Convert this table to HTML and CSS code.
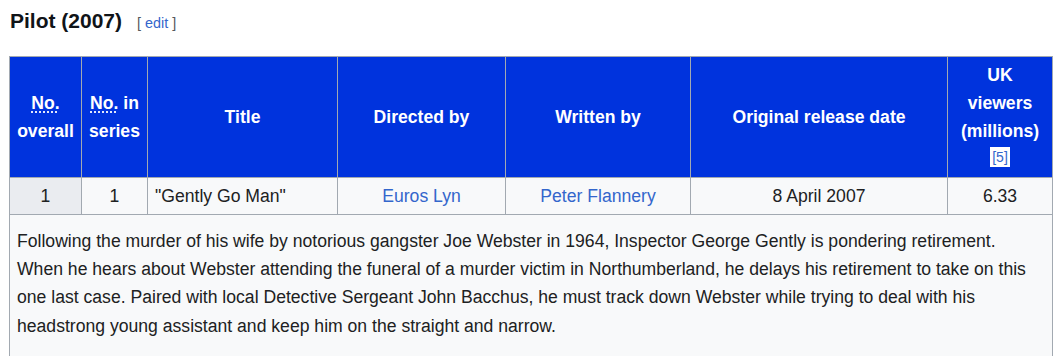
FILE: index.html
```html
<!DOCTYPE html>
<html>
<head>
<meta charset="utf-8">
<link rel="stylesheet" href="styles.css">
</head>
<body>
<div class="page">
  <h3 class="heading"><span class="title">Pilot (2007)</span><span class="editsection">[ <a href="#">edit</a> ]</span></h3>
  <table class="episodes">
    <colgroup>
      <col class="c1"><col class="c2"><col class="c3"><col class="c4"><col class="c5"><col class="c6"><col class="c7">
    </colgroup>
    <thead>
      <tr>
        <th><abbr>No.</abbr><br>overall</th>
        <th><abbr>No.</abbr> in<br>series</th>
        <th>Title</th>
        <th>Directed by</th>
        <th>Written by</th>
        <th>Original release date</th>
        <th>UK<br>viewers<br>(millions)<br><sup class="ref"><a href="#">[5]</a></sup></th>
      </tr>
    </thead>
    <tbody>
      <tr class="row">
        <th class="rowhead">1</th>
        <td class="center">1</td>
        <td class="left">"Gently Go Man"</td>
        <td class="center"><a href="#">Euros Lyn</a></td>
        <td class="center"><a href="#">Peter Flannery</a></td>
        <td class="center">8 April 2007</td>
        <td class="center">6.33</td>
      </tr>
      <tr>
        <td class="desc" colspan="7">Following the murder of his wife by notorious gangster Joe Webster in 1964, Inspector George Gently is pondering retirement. When he hears about Webster attending the funeral of a murder victim in Northumberland, he delays his retirement to take on this one last case. Paired with local Detective Sergeant John Bacchus, he must track down Webster while trying to deal with his headstrong young assistant and keep him on the straight and narrow.</td>
      </tr>
    </tbody>
  </table>
</div>
</body>
</html>
```

FILE: styles.css
```css
html, body {
  margin: 0;
  padding: 0;
  background: #ffffff;
}
body {
  font-family: "Liberation Sans", Arial, sans-serif;
  color: #202122;
}
.page {
  padding: 0 6px 0 9px;
}
.heading {
  margin: 0;
  padding-top: 9px;
  height: 56px;
  box-sizing: border-box;
  display: flex;
  align-items: baseline;
  font-size: 21px;
  font-weight: bold;
  color: #101418;
}
.title {
  margin-left: 1px;
}
.editsection {
  margin-left: 15px;
  font-size: 14.4px;
  font-weight: normal;
  color: #54595d;
}
.editsection a {
  color: #3366cc;
  text-decoration: none;
}
.episodes {
  border-collapse: collapse;
  table-layout: fixed;
  width: 1044px;
  font-size: 17.6px;
  line-height: 28.2px;
  border: 1px solid #a2a9b1;
}
.c1 { width: 72px; }
.c2 { width: 66px; }
.c3 { width: 190px; }
.c4 { width: 168px; }
.c5 { width: 185px; }
.c6 { width: 257px; }
.c7 { width: 105px; }
.episodes th, .episodes td {
  border: 1px solid #a2a9b1;
  padding: 3px 7px;
}
.episodes thead th {
  background: #0033dd;
  color: #ffffff;
  font-weight: bold;
  text-align: center;
  vertical-align: middle;
  height: 116px;
  padding: 2px 3px;
}
abbr {
  text-decoration: underline dotted;
  text-underline-offset: 3px;
}
.ref {
  font-size: 14px;
  line-height: 1;
  font-weight: normal;
  vertical-align: 3px;
}
.ref a {
  background: #ffffff;
  color: #3366cc;
  text-decoration: none;
  padding: 2px 2px;
}
.row td, .row th {
  background: #f8f9fa;
  height: 29px;
  padding-top: 4px;
  padding-bottom: 3px;
}
.row .rowhead {
  background: #eaecf0;
  font-weight: normal;
  text-align: center;
}
.center { text-align: center; }
.left { text-align: left; }
.episodes td a {
  color: #3366cc;
  text-decoration: none;
}
.desc {
  background: #f8f9fa;
  padding: 12px 7px 20px 7px !important;
  text-align: left;
}
```
